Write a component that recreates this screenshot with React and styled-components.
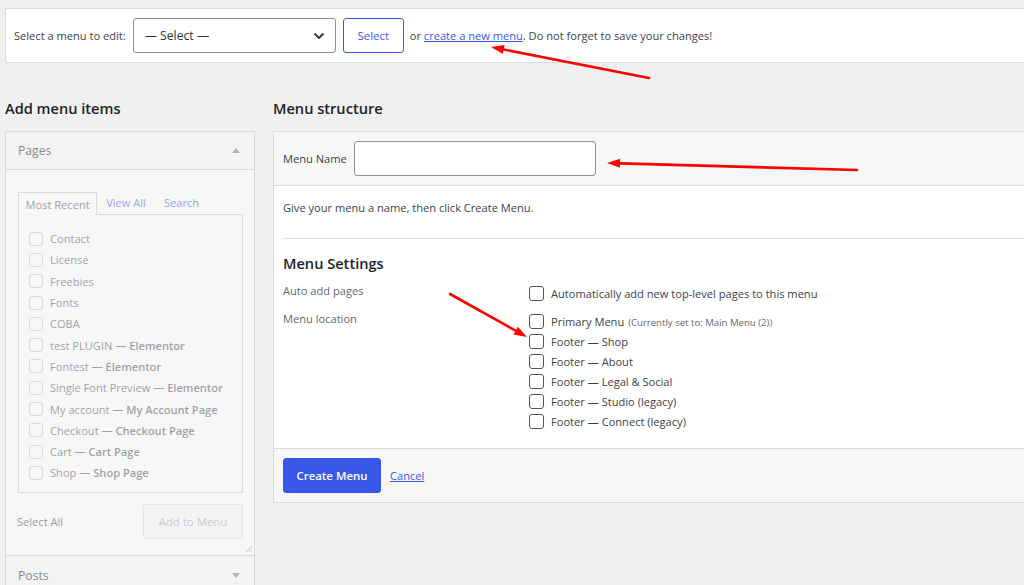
import React from 'react';
import styled, { createGlobalStyle } from 'styled-components';

const Global = createGlobalStyle`
  html, body { margin: 0; padding: 0; background: #f0f0f1; overflow: hidden; }
  body {
    font-family: "Open Sans", "Noto Sans", sans-serif;
    font-size: 11.1px;
    color: #3c434a;
  }
  * { box-sizing: border-box; }
`;

const Page = styled.div`
  position: relative;
  width: 1060px;
  height: 585px;
  padding: 8px 0 0 5px;
`;

const TopBar = styled.div`
  display: flex;
  align-items: center;
  gap: 6px;
  height: 55px;
  background: #fff;
  border: 1px solid #dcdcde;
  padding: 0 8px;
`;

const Text = styled.span`
  white-space: nowrap;
`;

const Link = styled.a`
  color: #3858e9;
  text-decoration: underline;
  cursor: pointer;
`;

const SelectBox = styled.div`
  display: flex;
  align-items: center;
  justify-content: space-between;
  width: 203px;
  height: 35px;
  border: 1px solid #8c8f94;
  border-radius: 3px;
  padding: 0 10px 0 11px;
  margin-left: 1px;
  margin-right: 1px;
  background: #fff;
  color: #2c3338;
  font-size: 12.2px;
`;

const OutlineButton = styled.button`
  width: ${p => p.$w || 61}px;
  height: 35px;
  padding: 0;
  font-family: inherit;
  font-size: 11.4px;
  color: #3858e9;
  background: #fff;
  border: 1px solid #3858e9;
  border-radius: 3px;
`;

const Columns = styled.div`
  display: grid;
  grid-template-columns: 250px 1fr;
  column-gap: 18px;
  margin-top: 35px;
`;

const Column = styled.div`
  display: flex;
  flex-direction: column;
`;

const Heading = styled.h2`
  margin: 0 0 13px;
  font-size: 14.6px;
  line-height: 20px;
  font-weight: 600;
  color: #1d2327;
`;

const SideBox = styled.div`
  opacity: 0.5;
  border: 1px solid #c3c4c7;
  background: #fff;
`;

const SectionHeader = styled.div`
  display: flex;
  align-items: center;
  justify-content: space-between;
  height: ${p => p.$h || 38}px;
  padding: 0 12px;
  background: #f6f7f7;
  border-bottom: ${p => (p.$last ? 'none' : '1px solid #c3c4c7')};
  border-top: ${p => (p.$first ? 'none' : '1px solid #c3c4c7')};
  font-size: 12.2px;
  color: #1d2327;
`;

const Triangle = styled.span`
  width: 0;
  height: 0;
  border-left: 4px solid transparent;
  border-right: 4px solid transparent;
  ${p => (p.$down ? 'border-top: 5px solid #787c82;' : 'border-bottom: 5px solid #787c82;')}
  margin-right: 2px;
`;

const SectionBody = styled.div`
  position: relative;
  padding: 22px 11px 16px 12px;
`;

const Tabs = styled.div`
  display: flex;
  align-items: flex-end;
  height: 22px;
`;

const Tab = styled.div`
  height: 23px;
  padding: 0 ${p => (p.$active ? 6.5 : 9)}px;
  display: flex;
  align-items: center;
  color: ${p => (p.$active ? '#50575e' : '#3858e9')};
  ${p =>
    p.$active
      ? `border: 1px solid #c3c4c7; border-bottom: none; background: #fff; margin-bottom: -1px; position: relative;`
      : ''}
`;

const TabPanel = styled.div`
  border: 1px solid #c3c4c7;
  height: 279px;
  padding: 13px 10px 10px 10px;
`;

const ItemRow = styled.div`
  display: flex;
  align-items: center;
  gap: 7px;
  height: 21.3px;
  white-space: nowrap;
  color: #50575e;
`;

const FakeCheck = styled.span`
  width: 14px;
  height: 14px;
  border: 1px solid #c3c4c7;
  border-radius: 3px;
  background: #fff;
  flex: none;
`;

const Strong = styled.strong`
  font-weight: 600;
`;

const SideActions = styled.div`
  display: flex;
  align-items: center;
  justify-content: space-between;
  margin-top: 11px;
`;

const GrayButton = styled.button`
  width: 100px;
  height: 35px;
  font-family: inherit;
  font-size: 11.4px;
  color: #a7aaad;
  background: #f6f7f7;
  border: 1px solid #dcdcde;
  border-radius: 3px;
`;

const Grip = styled.svg`
  position: absolute;
  right: 1px;
  bottom: 2px;
`;

const MenuBox = styled.div`
  border: 1px solid #dcdcde;
  background: #fff;
`;

const MenuHeader = styled.div`
  display: flex;
  align-items: center;
  gap: 7px;
  padding: 9px 9px;
  background: #f6f7f7;
  border-bottom: 1px solid #dcdcde;
`;

const TextInput = styled.input`
  width: 242px;
  height: 35px;
  border: 1px solid #8c8f94;
  border-radius: 3px;
  background: #fff;
  font-family: inherit;
`;

const MenuBody = styled.div`
  padding: 14px 0 17px 9px;
`;

const Para = styled.p`
  margin: 0;
  line-height: 16px;
`;

const Divider = styled.div`
  margin-top: 22px;
  border-top: 1px solid #dcdcde;
`;

const SubHeading = styled.h3`
  margin: 14px 0 10px;
  font-size: 14.6px;
  line-height: 20px;
  font-weight: 600;
  color: #1d2327;
`;

const SettingRow = styled.div`
  display: grid;
  grid-template-columns: 246px 1fr;
  margin-bottom: ${p => p.$mb || 0}px;
`;

const SettingLabel = styled.div`
  color: #646970;
  line-height: 16px;
  padding-top: ${p => p.$pt || 0}px;
`;

const CheckList = styled.div`
  display: flex;
  flex-direction: column;
`;

const CheckRow = styled.label`
  display: flex;
  align-items: center;
  gap: 7px;
  height: 20px;
  white-space: nowrap;
`;

const Check = styled.span`
  width: 15px;
  height: 15px;
  border: 1px solid #50575e;
  border-radius: 3px;
  background: #fff;
  flex: none;
`;

const Small = styled.span`
  font-size: 9.6px;
  color: #646970;
  margin-left: 1px;
`;

const MenuFooter = styled.div`
  display: flex;
  align-items: center;
  gap: 9px;
  padding: 9px 9px 9px;
  background: #f6f7f7;
  border-top: 1px solid #dcdcde;
`;

const PrimaryButton = styled.button`
  width: 98px;
  height: 35px;
  font-family: inherit;
  font-size: 11.4px;
  font-weight: 600;
  color: #fff;
  background: #3858e9;
  border: 1px solid #3858e9;
  border-radius: 3px;
`;

const Overlay = styled.svg`
  position: absolute;
  left: 0;
  top: 0;
  pointer-events: none;
`;

const pages = [
  ['Contact'],
  ['License'],
  ['Freebies'],
  ['Fonts'],
  ['COBA'],
  ['test PLUGIN', 'Elementor'],
  ['Fontest', 'Elementor'],
  ['Single Font Preview', 'Elementor'],
  ['My account', 'My Account Page'],
  ['Checkout', 'Checkout Page'],
  ['Cart', 'Cart Page'],
  ['Shop', 'Shop Page'],
];

const locations = [
  'Footer — Shop',
  'Footer — About',
  'Footer — Legal & Social',
  'Footer — Studio (legacy)',
  'Footer — Connect (legacy)',
];

function Arrow({ x1, y1, x2, y2 }) {
  const dx = x2 - x1;
  const dy = y2 - y1;
  const len = Math.hypot(dx, dy);
  const ux = dx / len;
  const uy = dy / len;
  const hl = 13;
  const hw = 4.5;
  const bx = x2 - ux * hl;
  const by = y2 - uy * hl;
  const px = -uy * hw;
  const py = ux * hw;
  return (
    <g>
      <line x1={x1} y1={y1} x2={bx} y2={by} stroke="#ff0000" strokeWidth="2.6" strokeLinecap="round" />
      <polygon points={`${x2},${y2} ${bx + px},${by + py} ${bx - px},${by - py}`} fill="#ff0000" />
    </g>
  );
}

export default function App() {
  return (
    <>
      <Global />
      <Page>
        <TopBar>
          <Text>Select a menu to edit:</Text>
          <SelectBox>
            <span>— Select —</span>
            <svg width="12" height="8" viewBox="0 0 12 8">
              <polyline points="1.5,1.5 6,6 10.5,1.5" fill="none" stroke="#2c3338" strokeWidth="1.8" />
            </svg>
          </SelectBox>
          <OutlineButton $w={61}>Select</OutlineButton>
          <Text>
            or <Link>create a new menu</Link>. Do not forget to save your changes!
          </Text>
        </TopBar>

        <Columns>
          <Column>
            <Heading>Add menu items</Heading>
            <SideBox>
              <SectionHeader $first>
                <span>Pages</span>
                <Triangle />
              </SectionHeader>
              <SectionBody>
                <Tabs>
                  <Tab $active>Most Recent</Tab>
                  <Tab>View All</Tab>
                  <Tab>Search</Tab>
                </Tabs>
                <TabPanel>
                  {pages.map(([name, state]) => (
                    <ItemRow key={name}>
                      <FakeCheck />
                      <span>
                        {name}
                        {state && (
                          <>
                            {' '}
                            <Strong>— {state}</Strong>
                          </>
                        )}
                      </span>
                    </ItemRow>
                  ))}
                </TabPanel>
                <SideActions>
                  <span style={{ marginLeft: -1 }}>Select All</span>
                  <GrayButton>Add to Menu</GrayButton>
                </SideActions>
                <Grip width="8" height="8" viewBox="0 0 8 8">
                  <line x1="1" y1="7" x2="7" y2="1" stroke="#8c8f94" strokeWidth="1" />
                  <line x1="4" y1="7" x2="7" y2="4" stroke="#8c8f94" strokeWidth="1" />
                </Grip>
              </SectionBody>
              <SectionHeader $last $h={40}>
                <span>Posts</span>
                <Triangle $down />
              </SectionHeader>
            </SideBox>
          </Column>

          <Column>
            <Heading>Menu structure</Heading>
            <MenuBox>
              <MenuHeader>
                <Text>Menu Name</Text>
                <TextInput />
              </MenuHeader>
              <MenuBody>
                <Para>Give your menu a name, then click Create Menu.</Para>
                <Divider />
                <SubHeading>Menu Settings</SubHeading>
                <SettingRow $mb={8}>
                  <SettingLabel>Auto add pages</SettingLabel>
                  <CheckList>
                    <CheckRow>
                      <Check />
                      <span>Automatically add new top-level pages to this menu</span>
                    </CheckRow>
                  </CheckList>
                </SettingRow>
                <SettingRow>
                  <SettingLabel>Menu location</SettingLabel>
                  <CheckList>
                    <CheckRow>
                      <Check />
                      <span>
                        Primary Menu <Small>(Currently set to: Main Menu (2))</Small>
                      </span>
                    </CheckRow>
                    {locations.map(l => (
                      <CheckRow key={l}>
                        <Check />
                        <span>{l}</span>
                      </CheckRow>
                    ))}
                  </CheckList>
                </SettingRow>
              </MenuBody>
              <MenuFooter>
                <PrimaryButton>Create Menu</PrimaryButton>
                <Link>Cancel</Link>
              </MenuFooter>
            </MenuBox>
          </Column>
        </Columns>

        <Overlay width="1024" height="585" viewBox="0 0 1024 585">
          <Arrow x1={649} y1={78} x2={491} y2={47} />
          <Arrow x1={857} y1={170} x2={607} y2={163} />
          <Arrow x1={450} y1={294} x2={527} y2={337} />
        </Overlay>
      </Page>
    </>
  );
}
